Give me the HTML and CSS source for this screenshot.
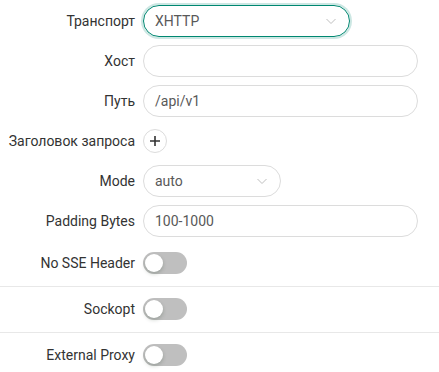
FILE: index.html
```html
<!DOCTYPE html>
<html lang="ru">
<head>
    <meta charset="UTF-8">
    <meta name="viewport" content="width=device-width, initial-scale=1.0">
    <title>XHTTP</title>
    <link rel="stylesheet" href="styles.css">
</head>
<body>
    <form class="stream-form">
        <div class="form-row">
            <label class="form-label">Транспорт</label>
            <div class="select select-wide is-focused">
                <span class="select-value">XHTTP</span>
                <svg class="select-arrow" viewBox="0 0 12 12"><path d="M1.5 4l4.5 4.5L10.5 4"/></svg>
            </div>
        </div>

        <div class="form-row">
            <label class="form-label">Хост</label>
            <div class="input"></div>
        </div>

        <div class="form-row">
            <label class="form-label">Путь</label>
            <div class="input">/api/v1</div>
        </div>

        <div class="form-row">
            <label class="form-label">Заголовок запроса</label>
            <button type="button" class="icon-btn">
                <svg viewBox="0 0 12 12"><path d="M6 1v10M1 6h10"/></svg>
            </button>
        </div>

        <div class="form-row">
            <label class="form-label">Mode</label>
            <div class="select select-small">
                <span class="select-value">auto</span>
                <svg class="select-arrow" viewBox="0 0 12 12"><path d="M1.5 4l4.5 4.5L10.5 4"/></svg>
            </div>
        </div>

        <div class="form-row">
            <label class="form-label">Padding Bytes</label>
            <div class="input">100-1000</div>
        </div>

        <div class="form-row switch-row">
            <label class="form-label">No SSE Header</label>
            <span class="switch"></span>
        </div>

        <div class="divider"></div>

        <div class="form-row">
            <label class="form-label">Sockopt</label>
            <span class="switch"></span>
        </div>

        <div class="divider"></div>

        <div class="form-row">
            <label class="form-label">External Proxy</label>
            <span class="switch"></span>
        </div>
    </form>
</body>
</html>
```

FILE: styles.css
```css
:root {
    --primary-color: #008771;
    --text-color: #333333;
    --value-color: #595959;
    --border-color: #dcdcdc;
    --divider-color: #e8e8e8;
    --switch-off: #bfbfbf;
}

body {
    margin: 0;
    padding: 0;
    font-family: Roboto, 'Noto Sans', sans-serif;
    font-size: 14px;
    color: var(--text-color);
    background: #fff;
}

.stream-form {
    padding-top: 5px;
    display: flex;
    flex-direction: column;
    gap: 8px;
}

.form-row {
    display: grid;
    grid-template-columns: 135px 275px;
    column-gap: 8px;
    align-items: center;
    height: 32px;
}

.form-label {
    text-align: right;
    white-space: nowrap;
}

.input,
.select {
    box-sizing: border-box;
    height: 32px;
    padding: 0 11px;
    border: 1px solid var(--border-color);
    border-radius: 16px;
    color: var(--value-color);
    display: flex;
    align-items: center;
}

.select {
    justify-content: space-between;
}

.select-wide {
    width: 207px;
}

.select-small {
    width: 138px;
}

.is-focused {
    border-color: var(--primary-color);
    box-shadow: 0 0 0 2px rgba(0, 135, 113, 0.2);
}

.select-arrow {
    width: 12px;
    height: 12px;
    margin-right: 1px;
    fill: none;
    stroke: #bfbfbf;
    stroke-width: 1;
}

.icon-btn {
    width: 24px;
    height: 24px;
    padding: 0;
    border: 1px solid var(--border-color);
    border-radius: 50%;
    background: #fff;
    display: flex;
    align-items: center;
    justify-content: center;
}

.icon-btn svg {
    width: 12px;
    height: 12px;
    fill: none;
    stroke: #333;
    stroke-width: 1.6;
}

.switch-row {
    margin-top: 2px;
}

.switch {
    position: relative;
    display: block;
    width: 44px;
    height: 22px;
    border-radius: 11px;
    background: var(--switch-off);
}

.switch::after {
    content: "";
    position: absolute;
    top: 2px;
    left: 2px;
    width: 18px;
    height: 18px;
    border-radius: 50%;
    background: #fff;
    box-shadow: 0 2px 4px rgba(0, 35, 11, 0.2);
}

.divider {
    height: 1px;
    background: var(--divider-color);
    margin: -1px 0 -2px;
}
```
